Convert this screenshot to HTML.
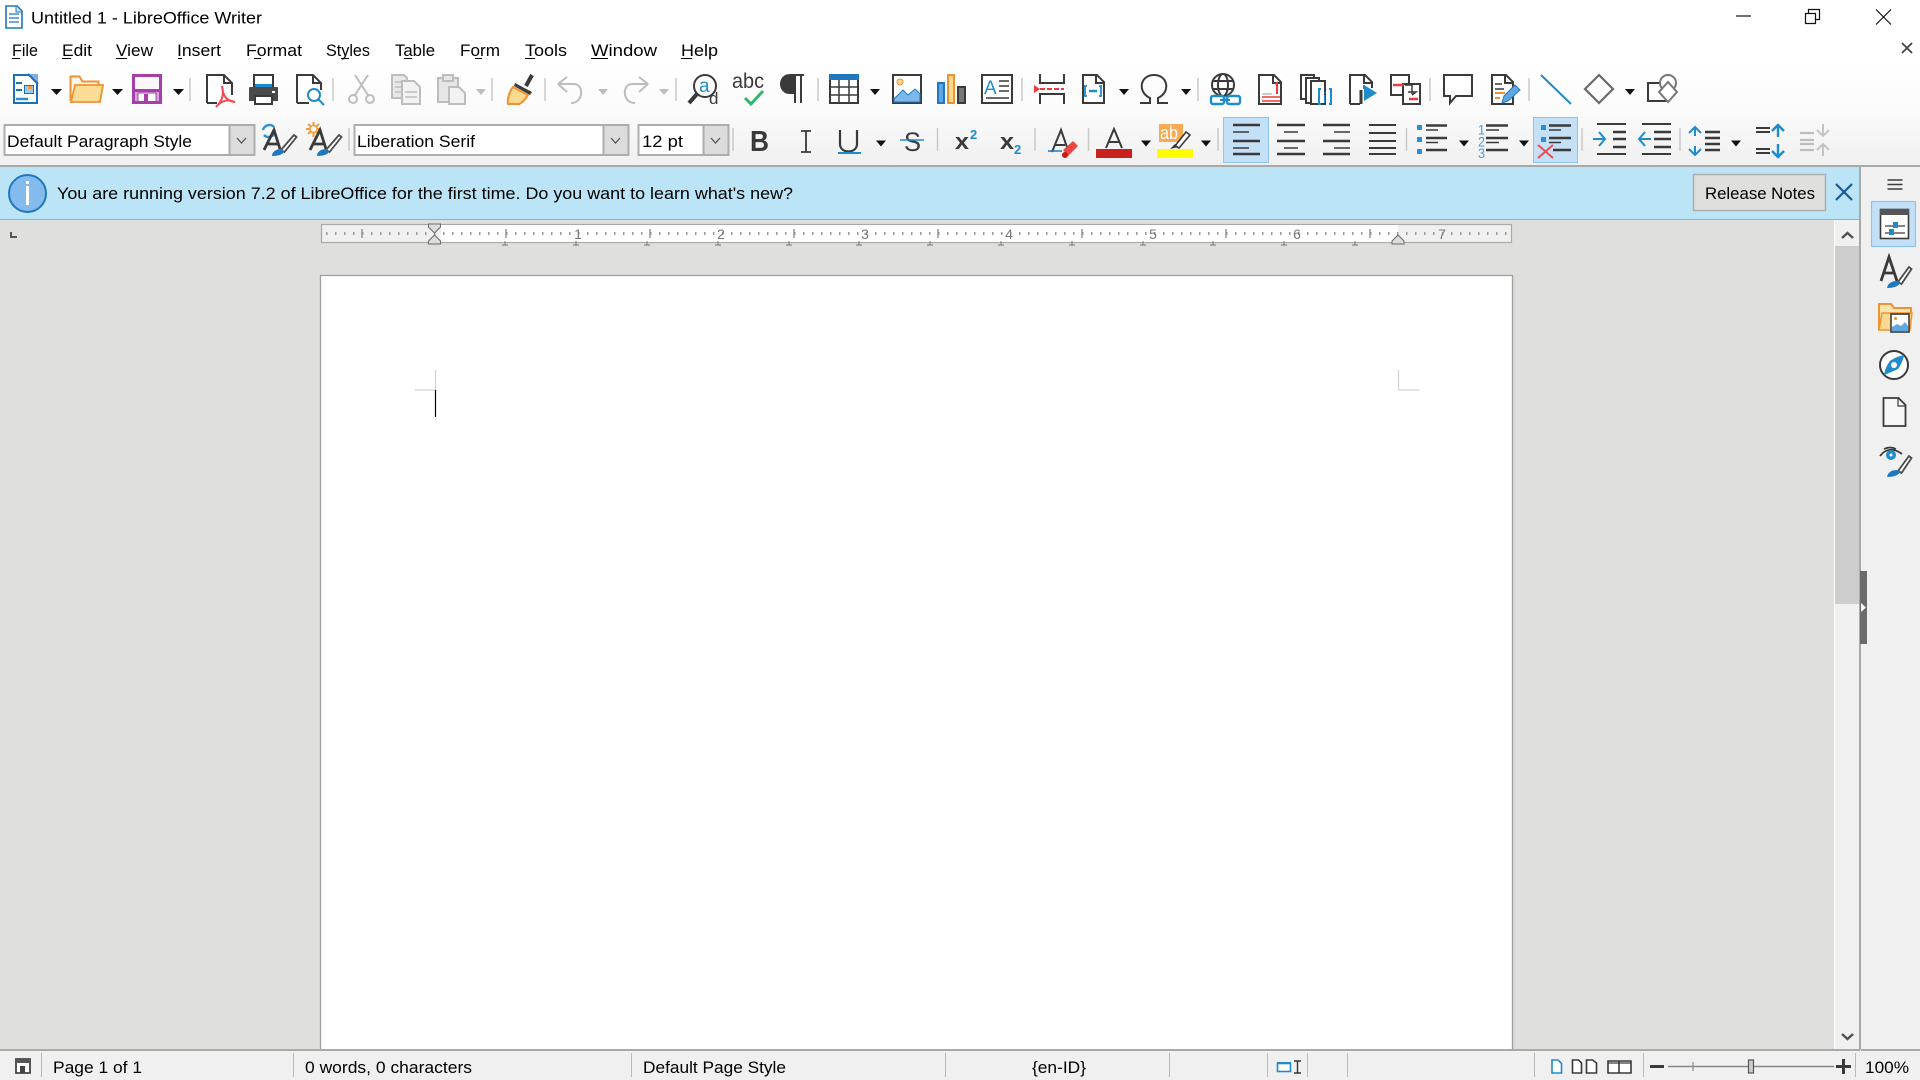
<!DOCTYPE html>
<html><head><meta charset="utf-8"><title>Untitled 1 - LibreOffice Writer</title>
<style>
html,body{margin:0;padding:0;background:#fff;width:1920px;height:1080px;overflow:hidden}
svg{display:block}
text{font-family:"Liberation Sans",sans-serif;font-size:17px;fill:#000}
.s{stroke:#c9c9c9;stroke-width:1.5;fill:none}
.k{fill:none;stroke:#3a3a3a;stroke-width:2}
.g{fill:none;stroke:#bdbdbd;stroke-width:2}
.b{fill:none;stroke:#1e8bcd;stroke-width:2}
.l{fill:none;stroke:#3a3a3a;stroke-width:2.4}
.m{fill:none;stroke:#3a3a3a;stroke-width:2.6}
.n{fill:none;stroke:#3a3a3a;stroke-width:1.5}
</style></head><body>
<svg width="1920" height="1080" viewBox="0 0 1920 1080" xmlns="http://www.w3.org/2000/svg">
<defs><linearGradient id="tb" x1="0" y1="0" x2="0" y2="1"><stop offset="0" stop-color="#fff"/><stop offset="0.45" stop-color="#fbfbfb"/><stop offset="1" stop-color="#f0f0f0"/></linearGradient></defs>
<rect width="1920" height="1080" fill="#fff"/>
<rect x="0" y="62" width="1920" height="104" fill="url(#tb)"/>
<!-- title -->
<path d="M6 6h11l5 5v17H6z" fill="#fff" stroke="#1c78bd" stroke-width="1.6"/><path d="M16 6v6h6" fill="#cfe6f7" stroke="#1c78bd"/><path d="M9 14h10M9 18h10M9 22h10" stroke="#1c78bd" stroke-width="1.2"/>
<text x="31" y="23.500" textLength="231" lengthAdjust="spacingAndGlyphs">Untitled 1 - LibreOffice Writer</text>
<path d="M1736 16h15" stroke="#111" stroke-width="1.2"/>
<path d="M1805.500 13.500h10v10h-10zM1808.500 13.500v-4h11v10h-4" fill="none" stroke="#111" stroke-width="1.2"/>
<path d="M1876 9.500l15 15M1891 9.500l-15 15" stroke="#111" stroke-width="1.2"/>
<path d="M1902 43l10 10M1912 43l-10 10" stroke="#444" stroke-width="1.8"/>
<!-- menu -->
<g>
<text x="12" y="56" textLength="26" lengthAdjust="spacingAndGlyphs">File</text>
<text x="62" y="56" textLength="30" lengthAdjust="spacingAndGlyphs">Edit</text>
<text x="116" y="56" textLength="37" lengthAdjust="spacingAndGlyphs">View</text>
<text x="177" y="56" textLength="44" lengthAdjust="spacingAndGlyphs">Insert</text>
<text x="246" y="56" textLength="56" lengthAdjust="spacingAndGlyphs">Format</text>
<text x="326" y="56" textLength="44" lengthAdjust="spacingAndGlyphs">Styles</text>
<text x="395" y="56" textLength="40" lengthAdjust="spacingAndGlyphs">Table</text>
<text x="460" y="56" textLength="40" lengthAdjust="spacingAndGlyphs">Form</text>
<text x="525" y="56" textLength="42" lengthAdjust="spacingAndGlyphs">Tools</text>
<text x="591" y="56" textLength="66" lengthAdjust="spacingAndGlyphs">Window</text>
<text x="681" y="56" textLength="37" lengthAdjust="spacingAndGlyphs">Help</text>
<path d="M12 58.500h8M62 58.500h9M116 58.500h11M178 58.500h4M254 58.500h7M341 58.500h8M404 58.500h8M475 58.500h7M525 58.500h10M591 58.500h17M681 58.500h11" stroke="#000" stroke-width="1"/>
</g>
<!-- toolbar 1 seps -->
<path class="s" d="M190 78v23M333 78v23M492 78v23M545 78v23M676 78v23M818 78v23M1022 78v23M1198 78v23M1430 78v23M1529 78v23"/>
<!-- dropdown arrows -->
<path d="M51 89h11l-5.500 6zM112 89h11l-5.500 6zM173 89h11l-5.500 6zM870 89h10l-5 6zM1119 89h10l-5 6zM1181 89h10l-5 6zM1625 89h10l-5 6zM876 140.500h10l-5 6zM1141 140.500h10l-5 6zM1201 140.500h10l-5 6zM1459 140.500h10l-5 6zM1519 140.500h10l-5 6zM1731 140.500h10l-5 6z" fill="#111"/>
<path d="M476 89h10l-5 6zM598 89h10l-5 6zM659 89h10l-5 6z" fill="#bdbdbd"/>
<!-- new -->
<path d="M14 75h23v28H14z" fill="#fff" stroke="#1a6fb5" stroke-width="2"/><path d="M27 74h11v11z" fill="#7db0de"/><path d="M28 74l10 10" stroke="#1a6fb5" stroke-width="2"/>
<path d="M16 83h6M16 90h6" stroke="#1a6fb5" stroke-width="2"/><path d="M16 99h12" stroke="#2a8fd6" stroke-width="2.500"/>
<rect x="24.500" y="85.500" width="9" height="8" fill="#9cc9ee" stroke="#1a6fb5"/><rect x="28" y="86" width="4" height="3" fill="#f09a38"/>
<!-- open -->
<path d="M70.500 101V76.500h9l3 5h16v4" fill="#fff8e8" stroke="#ee9236" stroke-width="2"/>
<path d="M71 102l4-17h28l-3 17z" fill="#fbdc94" stroke="#ee9236" stroke-width="1.800"/>
<!-- save -->
<rect x="133.500" y="75.500" width="27" height="27" fill="#fbf7fb" stroke="#a640a8" stroke-width="3"/>
<rect x="133" y="89" width="28" height="14" fill="#d9a3d9"/><rect x="133" y="89" width="28" height="3" fill="#a640a8"/>
<rect x="138" y="93" width="18" height="10" fill="#fff" stroke="#a640a8" stroke-width="1"/><rect x="144" y="94" width="4" height="9" fill="#a640a8"/>
<path d="M133.500 75.500h27v27h-27z" fill="none" stroke="#a640a8" stroke-width="3"/>
<!-- pdf -->
<g transform="translate(206,74)"><path d="M1 29V1h17l8 8v12" fill="#fff" stroke="#3a3a3a" stroke-width="2"/><path d="M1 29h10M18 1v8h8" class="k"/></g>
<path d="M222 86c2 8 1 14-6 21 6-7 12-8 19-5-7-1-12-4-13-16z" fill="none" stroke="#ee4c50" stroke-width="2"/>
<!-- print -->
<g transform="translate(248,74)"><path d="M6 15V1h19v14" fill="#fff" stroke="#3a3a3a" stroke-width="2"/><rect x="7" y="10" width="17" height="4" fill="#1f8ad0"/><path d="M2 13h27a1 1 0 0 1 1 1v13H1V14a1 1 0 0 1 1-1z" fill="#4a4a4a"/><path d="M7 22h17v8H7z" fill="#fff" stroke="#3a3a3a" stroke-width="2"/><rect x="24" y="17" width="3" height="2" fill="#fff"/></g>
<!-- preview -->
<g transform="translate(296,74)"><path d="M1 29V1h16l8 8v7M1 29h12" fill="#fff" stroke="#3a3a3a" stroke-width="2"/><path d="M17 1v8h8" class="k"/><circle cx="18" cy="21" r="6" fill="#fff" stroke="#1e8bcd" stroke-width="2"/><path d="M22 25l6 6" class="b"/></g>
<!-- cut -->
<g transform="translate(348,74)" class="g"><circle cx="5" cy="25" r="4"/><circle cx="22" cy="25" r="4"/><path d="M7 21L20 1M20 21L7 1"/></g>
<!-- copy -->
<g transform="translate(391,74)"><path d="M1 1h12l3 3v20H1z" fill="#e8e8e8" stroke="#bdbdbd" stroke-width="2"/><path d="M11 7h12l6 6v17H11z" fill="#f2f2f2" stroke="#bdbdbd" stroke-width="2"/><path d="M4 8h6M4 13h6M4 18h6M14 18h12M14 23h12" stroke="#bdbdbd" stroke-width="1.500"/></g>
<!-- paste -->
<g transform="translate(437,74)"><path d="M1 4h20v24H1z" fill="#e6e6e6" stroke="#bdbdbd" stroke-width="2"/><rect x="6" y="1" width="10" height="6" fill="#e6e6e6" stroke="#bdbdbd" stroke-width="2"/><path d="M12 13h10l6 6v11H12z" fill="#f2f2f2" stroke="#bdbdbd" stroke-width="2"/></g>
<!-- clone -->
<g transform="translate(506,74)"><path d="M20 12L26 1" stroke="#3a3a3a" stroke-width="4" fill="none"/><path d="M9 9l17 9-2 3L8 12z" fill="#3a3a3a"/><path d="M7 13l15 8c-3 5-6 8-9 9H2c-1-4 1-12 5-17z" fill="#fbd98f" stroke="#ee9236" stroke-width="2"/></g>
<!-- undo/redo -->
<path class="g" d="M558 84l9-7M558 84l9 8M558 84h16c10 0 10 19-3 19"/>
<path class="g" d="M648 84l-9-7M648 84l-9 8M648 84h-16c-10 0-10 19 3 19"/>
<!-- find -->
<g transform="translate(688,74)"><circle cx="17" cy="12" r="11" fill="#fff" stroke="#3a3a3a" stroke-width="2"/><path d="M9 20L1 29" stroke="#3a3a3a" stroke-width="4"/><text x="11" y="18" style="font-size:19px;fill:#1e8bcd">a</text><text x="21" y="30" style="font-size:17px;fill:#3a3a3a">d</text></g>
<!-- spell -->
<text x="732" y="88" textLength="32" lengthAdjust="spacingAndGlyphs" style="font-size:21px;fill:#3a3a3a">abc</text>
<path d="M745 98l6 6 12-13" fill="none" stroke="#2eb86c" stroke-width="3"/>
<!-- pilcrow -->
<path d="M793 75h-3c-12 0-12 18 0 18h3zM794 75h10M795 75v28M801 75v28" fill="#3a3a3a" stroke="#3a3a3a" stroke-width="2"/>
<!-- table -->
<g transform="translate(829,74)"><rect x="1" y="1" width="28" height="28" fill="#fff" stroke="#3a3a3a" stroke-width="2"/><rect x="0" y="0" width="30" height="6" fill="#1e78c0"/><path d="M1 13h28M1 21h28M10 6v23M20 6v23" stroke="#3a3a3a" stroke-width="1.500"/></g>
<!-- image -->
<g transform="translate(892,74)"><rect x="1" y="1" width="28" height="28" fill="#fff" stroke="#3a3a3a" stroke-width="2"/><path d="M2 28v-3l9-9 5 5 7-6 5 5v8z" fill="#7db8ea" stroke="#1e78c0"/><circle cx="8" cy="8" r="3" fill="#fbd98f" stroke="#ee9236"/></g>
<!-- chart -->
<rect x="938" y="83" width="6" height="20" fill="#5fa8e4" stroke="#1e78c0" stroke-width="2"/><rect x="948" y="75" width="6" height="28" fill="#fbd98f" stroke="#ee9236" stroke-width="2"/><rect x="958" y="87" width="7" height="16" fill="#777" stroke="#3a3a3a" stroke-width="2"/>
<!-- textbox -->
<g transform="translate(981,74)"><rect x="1" y="1" width="30" height="28" fill="#fff" stroke="#3a3a3a" stroke-width="2"/><text x="3" y="20" style="font-size:19px;fill:#1e8bcd">A</text><path d="M18 7h10M18 12h10M18 17h10M5 24h23" stroke="#555" stroke-width="1.800"/></g>
<!-- break -->
<path class="k" d="M1040 74v9h24v-9M1040 104v-10h24v10"/><path d="M1040 89h24" stroke="#ee3a3a" stroke-width="2" stroke-dasharray="5 2"/><path d="M1034 85l6 4-6 4z" fill="#ee3a3a"/>
<!-- field -->
<g transform="translate(1082,74)"><path d="M1 1h14l7 7v21H1z" fill="#fff" stroke="#3a3a3a" stroke-width="2"/><path d="M14 1v8h8" class="k"/><path d="M5 12h-2v10h2M17 12h2v10h-2" fill="none" stroke="#1e8bcd" stroke-width="1.800"/><path d="M7 17h8" stroke="#1e8bcd" stroke-width="2.500"/></g>
<!-- omega (drawn thin to match toolbar icon) -->
<path d="M1140 103h10v-5c-13-6-10-23 4-23s17 17 4 23v5h10" fill="none" stroke="#3a3a3a" stroke-width="2"/>
<!-- link -->
<g transform="translate(1209,74)"><circle cx="14" cy="11" r="11" fill="#fff" stroke="#3a3a3a" stroke-width="2"/><ellipse cx="14" cy="11" rx="5" ry="11" class="k"/><path d="M3 7h22M3 15h22" class="k"/><rect x="2" y="22" width="13" height="8" rx="2" fill="#fff" stroke="#1e8bcd" stroke-width="2.400"/><rect x="18" y="22" width="13" height="8" rx="2" fill="#fff" stroke="#1e8bcd" stroke-width="2.400"/><path d="M11 26h10" stroke="#1e8bcd" stroke-width="2"/></g>
<!-- footnote -->
<g transform="translate(1258,74)"><path d="M1 1h15l7 7v22H1z" fill="#fff" stroke="#3a3a3a" stroke-width="2"/><path d="M15 1v8h8" class="k"/><path d="M4 20h10" stroke="#bbb" stroke-width="1.500"/><path d="M4 23h18M4 27h18" stroke="#ee3a3a" stroke-width="1.500"/><path d="M17 10l2-1v11" stroke="#ee3a3a" stroke-width="2" fill="none"/></g>
<!-- index -->
<g transform="translate(1300,74)" fill="#fff" stroke="#3a3a3a" stroke-width="2"><path d="M1 1h13v24H1z"/><path d="M6 4h13v25H6z"/><path d="M11 7h14v23H11z"/><text x="23" y="29" style="font-size:15px;fill:#1e8bcd;stroke:none">i</text><path d="M21 15h-2v15h2M29 15h2v15h-2" stroke="#1e8bcd" fill="none"/></g>
<!-- bookmark -->
<g transform="translate(1349,74)"><path d="M1 30V1h15l7 7v6M14 30" fill="#fff" stroke="#3a3a3a" stroke-width="2"/><path d="M15 1v8h8" class="k"/><path d="M1 30h10" class="k"/><path d="M12 16v14" stroke="#3a3a3a" stroke-width="3"/><path d="M15 11l13 8-13 8z" fill="#1e8bcd"/><path d="M15 15v-4" stroke="#1e8bcd" stroke-width="2"/></g>
<!-- cross ref -->
<g transform="translate(1390,74)"><path d="M1 1h18v20H1z" fill="#fff" stroke="#3a3a3a" stroke-width="2"/><path d="M13 10h17v20H13z" fill="#fff" stroke="#3a3a3a" stroke-width="2"/><path d="M3 11h11" stroke="#ee3a3a" stroke-width="2.500"/><path d="M19 25h9" stroke="#ee3a3a" stroke-width="2.500"/><path d="M15 11h7v9M18 18h8l-4 3" class="k" style="stroke-width:1.500"/></g>
<!-- comment -->
<path d="M1444 75h28v21h-16l-6 7v-7h-6z" fill="#fff" stroke="#3a3a3a" stroke-width="2"/>
<!-- track -->
<g transform="translate(1491,74)"><path d="M1 1h14l7 7v22H1z" fill="#fff" stroke="#3a3a3a" stroke-width="2"/><path d="M14 1v8h8" class="k"/><path d="M4 10h7M4 15h9" stroke="#3a3a3a" stroke-width="1.500"/><path d="M4 19h10M4 24h5" stroke="#ee9236" stroke-width="2"/><path d="M11 29l2-7 11-11 5 5-12 11z" fill="#5fa8e4" stroke="#1e78c0"/></g>
<!-- line -->
<path d="M1541 75l30 29" stroke="#1e8bcd" stroke-width="2"/>
<!-- diamond -->
<path d="M1599 75l14 14-14 14-14-14z" fill="none" stroke="#6a6a6a" stroke-width="2.200"/>
<!-- group -->
<g transform="translate(1647,74)"><rect x="1" y="9" width="20" height="18" fill="#fff" stroke="#3a3a3a" stroke-width="2"/><circle cx="21" cy="9" r="8" fill="#fff" stroke="#777" stroke-width="2"/><path d="M21 8l9 10-9 10-9-10z" fill="#fff" stroke="#777" stroke-width="2"/></g>

<!-- toolbar 2: combos -->
<g fill="#fff" stroke="#adadad" stroke-width="2"><rect x="4.500" y="125" width="250" height="30"/><rect x="354.500" y="125" width="274" height="30"/><rect x="638.500" y="125" width="90" height="30"/></g>
<g fill="#dcdcdc" stroke="#adadad" stroke-width="2"><rect x="229.500" y="125" width="25" height="30"/><rect x="603.500" y="125" width="25" height="30"/><rect x="703.500" y="125" width="25" height="30"/></g>
<path d="M237 138l4.500 5 4.500-5M611 138l4.500 5 4.500-5M711 138l4.500 5 4.500-5" fill="none" stroke="#555" stroke-width="1.300"/>
<text x="7" y="147" textLength="185" lengthAdjust="spacingAndGlyphs">Default Paragraph Style</text>
<text x="357" y="147" textLength="118" lengthAdjust="spacingAndGlyphs">Liberation Serif</text>
<text x="642" y="147" textLength="41" lengthAdjust="spacingAndGlyphs">12 pt</text>
<path class="s" d="M349 128v23M733 128v23M937.500 128v23M1035 128v23M1088.500 128v23M1218 128v23M1406.500 128v23M1582 128v23M1680 128v23"/>
<!-- style update -->
<path d="M263 130a6.500 6.500 0 0 1 11-3M275 132a6.500 6.500 0 0 1-11 3" fill="none" stroke="#2a8fd6" stroke-width="2.400"/>
<path d="M264 150l10-20 6 19M268 144h11" fill="none" stroke="#3a3a3a" stroke-width="2.800"/>
<path d="M281 150l13-15 2.500 2-12 15z" fill="#fff" stroke="#4a4a4a" stroke-width="1.800"/>
<path d="M272 156c0-4 4-7 9-7l3 2c0 3-5 5-12 5z" fill="#1e78c0"/>
<!-- style new -->
<path d="M306 129h15M313.500 122v15M308 124l11 10M319 124l-11 10" stroke="#f09a38" stroke-width="2"/><circle cx="313.500" cy="129" r="3.500" fill="#fff" stroke="#f09a38" stroke-width="1.500"/>
<path d="M310 150l10-20 6 19M314 144h11" fill="none" stroke="#3a3a3a" stroke-width="2.800"/>
<path d="M326 150l13-15 2.500 2-12 15z" fill="#fff" stroke="#4a4a4a" stroke-width="1.800"/>
<path d="M317 156c0-4 4-7 9-7l3 2c0 3-5 5-12 5z" fill="#1e78c0"/>
<!-- B I U S -->
<text x="750" y="151" style="font-size:29px;font-weight:bold;fill:#3a3a3a" textLength="19" lengthAdjust="spacingAndGlyphs">B</text>
<path d="M801 131h10M801 152h10M806 131v21" fill="none" stroke="#3a3a3a" stroke-width="1.800"/>
<path d="M840 130v14c0 10 17 10 17 0v-14" fill="none" stroke="#3a3a3a" stroke-width="2.200"/><path d="M838 153h23" stroke="#1e8bcd" stroke-width="2"/>
<text x="904" y="151" style="font-size:27px;fill:#3a3a3a" textLength="17" lengthAdjust="spacingAndGlyphs">S</text><path d="M900 140h24" stroke="#1e8bcd" stroke-width="1.600"/>
<text x="955" y="149" style="font-size:22px;font-weight:bold;fill:#3a3a3a" textLength="14" lengthAdjust="spacingAndGlyphs">x</text><text x="970" y="139" style="font-size:13px;font-weight:bold;fill:#1e8bcd">2</text>
<text x="1000" y="149" style="font-size:22px;font-weight:bold;fill:#3a3a3a" textLength="14" lengthAdjust="spacingAndGlyphs">x</text><text x="1014" y="154" style="font-size:13px;font-weight:bold;fill:#1e8bcd">2</text>
<!-- clear format -->
<path d="M1052 152l9-22 7 20M1055 145h10" fill="none" stroke="#3a3a3a" stroke-width="2"/><path d="M1048 151h14" stroke="#1e78c0" stroke-width="1.500"/><path d="M1063 150l10-9 5 5-10 10z" fill="#ee4444"/><circle cx="1065" cy="155" r="3" fill="#c81818"/>
<!-- font colour -->
<path d="M1106 148l8-19 8 19M1109 142h10" fill="none" stroke="#3a3a3a" stroke-width="2"/><rect x="1096" y="149" width="36" height="9" fill="#c9211e"/>
<!-- highlight -->
<rect x="1159" y="124" width="24" height="18" fill="#f7a953"/><text x="1160" y="139" style="font-size:18px;fill:#fff" textLength="18" lengthAdjust="spacingAndGlyphs">ab</text><path d="M1175 146l11-14 4 3-11 13z" fill="#fff" stroke="#3a3a3a" stroke-width="1.600"/><path d="M1170 149l5-5 3 3z" fill="#333"/><rect x="1157" y="149" width="36" height="9" fill="#ffff00"/>
<!-- selected align left -->
<rect x="1223.500" y="117.500" width="45" height="45" fill="#c4e0f7" stroke="#8ec5f0"/>
<path class="m" d="M1233 125h27M1233 141h27M1233 154h27"/><path class="n" d="M1233 132h16M1233 148h16"/>
<path class="m" d="M1277 125h28M1277 141h28M1277 154h28"/><path class="n" d="M1284 132h14M1284 148h14"/>
<path class="m" d="M1323 125h27M1323 141h27M1323 154h27"/><path class="n" d="M1334 132h16M1334 148h16"/>
<path class="m" d="M1369 125h27M1369 133h27M1369 141h27M1369 148h27M1369 154h27" style="stroke-width:2"/>
<!-- bullets -->
<g fill="#2a8fd6"><rect x="1417" y="125" width="5" height="5"/><rect x="1417" y="137" width="5" height="5"/><rect x="1417" y="149" width="5" height="5"/></g>
<path class="m" d="M1426 125.500h21M1426 138h21M1426 150h21"/><path class="n" d="M1426 130h12M1426 142.500h12"/>
<text x="1478" y="134.500" style="font-size:14px;fill:#4a9bd8" textLength="7" lengthAdjust="spacingAndGlyphs">1</text><text x="1478" y="146.500" style="font-size:14px;fill:#4a9bd8" textLength="7" lengthAdjust="spacingAndGlyphs">2</text><text x="1478" y="158" style="font-size:14px;fill:#4a9bd8" textLength="7" lengthAdjust="spacingAndGlyphs">3</text>
<path class="m" d="M1486 125.500h22M1486 138h22M1486 150h22"/><path class="n" d="M1486 130h13M1486 142.500h13"/>
<!-- selected no list -->
<rect x="1533.500" y="117.500" width="44" height="45" fill="#c4e0f7" stroke="#8ec5f0"/>
<rect x="1541" y="125" width="5" height="5" fill="#2a8fd6"/><rect x="1541" y="137" width="5" height="5" fill="#2a8fd6"/>
<path class="m" d="M1549 125.500h22M1549 138h22M1553 150h18"/><path class="n" d="M1549 130h12M1549 142.500h12"/>
<path d="M1538 145l15 13M1553 145l-15 13" stroke="#ee4c50" stroke-width="2"/>
<!-- indent -->
<path class="n" d="M1597 124h29M1597 154h29" style="stroke-width:2"/><path class="m" d="M1613 132h13M1613 139h13M1613 147h13"/>
<path d="M1593 139h12M1599 132l6 7-6 7" class="b"/>
<path class="n" d="M1642 124h29M1642 154h29" style="stroke-width:2"/><path class="m" d="M1654 132h17M1654 139h17M1654 147h17"/>
<path d="M1651 139h-12M1645 132l-6 7 6 7" class="b"/>
<!-- line spacing -->
<path d="M1695 127v9M1695 146v9M1689 133l6-6 6 6M1689 149l6 6 6-6" class="b"/>
<path class="m" d="M1705 132h15M1705 138h15M1705 144h15M1705 150h15"/>
<path class="m" d="M1756 128h14M1756 132h14M1756 149h14M1756 153h14" style="stroke-width:2"/>
<path d="M1778 125v12M1772 131l6-6 6 6M1778 144v13M1772 151l6 6 6-6" class="b" style="stroke-width:2.400"/>
<path d="M1800 133h14M1800 140h14M1800 144h14M1800 150h14" stroke="#bdbdbd" stroke-width="2.200"/>
<path d="M1823 124v12M1817 130l6 6 6-6M1823 156v-12M1817 150l6-6 6 6" fill="none" stroke="#c4c4c4" stroke-width="2"/>

<path d="M0 166h1920" stroke="#a9a9a9" stroke-width="2"/>
<!-- infobar -->
<rect x="0" y="167" width="1859" height="52" fill="#bbe5f7"/>
<path d="M0 219.500h1859" stroke="#a9a9a9"/>
<circle cx="27.500" cy="193.500" r="18.500" fill="#83bcec" stroke="#1f78be" stroke-width="2"/>
<rect x="26" y="186" width="3" height="19" fill="#fff"/><rect x="26" y="181" width="3" height="3" fill="#fff"/>
<text x="57" y="199" textLength="736" lengthAdjust="spacingAndGlyphs">You are running version 7.2 of LibreOffice for the first time. Do you want to learn what's new?</text>
<rect x="1693.500" y="174.500" width="132" height="36" fill="#dfdfdd" stroke="#adadad" stroke-width="1.500"/>
<text x="1705" y="199" textLength="110" lengthAdjust="spacingAndGlyphs">Release Notes</text>
<path d="M1836 184l16 16M1852 184l-16 16" stroke="#1a5a96" stroke-width="2.200"/>
<!-- workspace -->
<rect x="0" y="220" width="1834" height="829" fill="#dfdfdd"/>
<path d="M11 232v5h6" fill="none" stroke="#555" stroke-width="2"/>
<!-- ruler -->
<rect x="321.500" y="224.500" width="1190" height="18" fill="#f0f0f0" stroke="#a9a9a9" stroke-width="1.200"/>
<rect x="441" y="225" width="957" height="17" fill="#fff"/>
<path d="M326 233.500H1510" stroke="#9a9a9a" stroke-width="3" stroke-dasharray="1.500 7.500"/>
<path d="M362 229v9M506 229v9M650 229v9M794 229v9M938 229v9M1082 229v9M1226 229v9M1370 229v9" stroke="#888" stroke-width="1.300"/>
<path d="M505 241v4m-3 0h6M576 241v4m-3 0h6M647 241v4m-3 0h6M718 241v4m-3 0h6M789 241v4m-3 0h6M859 241v4m-3 0h6M930 241v4m-3 0h6M1001 241v4m-3 0h6M1072 241v4m-3 0h6M1143 241v4m-3 0h6M1213 241v4m-3 0h6M1284 241v4m-3 0h6M1355 241v4m-3 0h6" stroke="#777" fill="none"/>
<g><text x="578" y="239" style="font-size:14px;fill:#777" text-anchor="middle">1</text><text x="721" y="239" style="font-size:14px;fill:#777" text-anchor="middle">2</text><text x="865" y="239" style="font-size:14px;fill:#777" text-anchor="middle">3</text><text x="1009" y="239" style="font-size:14px;fill:#777" text-anchor="middle">4</text><text x="1153" y="239" style="font-size:14px;fill:#777" text-anchor="middle">5</text><text x="1297" y="239" style="font-size:14px;fill:#777" text-anchor="middle">6</text><text x="1442" y="239" style="font-size:14px;fill:#777" text-anchor="middle">7</text></g>
<path d="M428.500 224h12v3l-6 6-6-6zM428.500 244h12v-3l-6-6-6 6z" fill="#dcdcdc" stroke="#6a6a6a"/>
<path d="M1392 244h12v-3l-6-6-6 6z" fill="#dcdcdc" stroke="#6a6a6a"/>
<!-- page -->
<rect x="320.500" y="275.500" width="1192" height="790" fill="#fff" stroke="#a0a0a0" stroke-width="1.300"/>
<path d="M1514 277V1049" stroke="#d6d6d4"/>
<path d="M435.500 370v20H415M1398.500 370v20h21" fill="none" stroke="#d2d2d2" stroke-width="1.200"/>
<path d="M435.500 390v27" stroke="#000" stroke-width="1.200"/>
<!-- scrollbar -->
<rect x="1834" y="220" width="1" height="830" fill="#fff"/>
<rect x="1835" y="220" width="24" height="830" fill="#f0f0f0"/>
<rect x="1835" y="246" width="24" height="358" fill="#cdcdcd"/>
<path d="M1842 238l5.500-5 5.500 5M1842 1034l5.500 5 5.500-5" fill="none" stroke="#505050" stroke-width="2.400"/>
<!-- sidebar -->
<rect x="1861" y="167" width="59" height="883" fill="#f0f0f0"/>
<rect x="1859" y="167" width="2" height="883" fill="#a9a9a9"/>
<rect x="1860" y="571" width="7" height="73" fill="#6b6b6b"/>
<path d="M1861 603l5 4.500-5 4.500z" fill="#fff"/>
<path d="M1887.500 180h15M1887.500 184.500h15M1887.500 189h15" stroke="#3a3a3a" stroke-width="1.600"/>
<rect x="1871.500" y="201.500" width="44" height="45" fill="#c4e0f7" stroke="#8ec5f0" stroke-width="1.200"/>
<rect x="1880.500" y="209.500" width="28" height="29" fill="#fff" stroke="#3a3a3a" stroke-width="1.600"/><rect x="1880" y="209" width="29" height="6" fill="#555"/>
<path d="M1885 226h20M1885 233h20" stroke="#3a3a3a" stroke-width="1.200"/><rect x="1893" y="222" width="5" height="6" fill="#1e8bcd"/><rect x="1889" y="229" width="5" height="6" fill="#1e8bcd"/>
<!-- styles -->
<path d="M1881 281l8-24 8 24M1884 273h11" fill="none" stroke="#3a3a3a" stroke-width="2.800"/><path d="M1898 282l11-15 2.500 2-10 15z" fill="#fff" stroke="#4a4a4a" stroke-width="1.800"/><path d="M1887 288c1-5 5-7 10-7l3 2c-1 3-6 5-13 5z" fill="#1e78c0"/>
<!-- gallery -->
<path d="M1879 330v-26h12l3 4h17v5" fill="#fce4ad" stroke="#ee9236" stroke-width="2"/><path d="M1879 330l3-17h30l-2 17z" fill="#fbd98f" stroke="#ee9236" stroke-width="1.500"/>
<rect x="1891" y="314" width="18" height="18" fill="#fff" stroke="#3a3a3a" stroke-width="1.600"/><path d="M1892 331v-4l5-3 4 2 4-4 3 4v5z" fill="#5fa8e4"/><circle cx="1895.500" cy="318.500" r="1.500" fill="#ee9236"/>
<!-- navigator -->
<circle cx="1894" cy="365" r="14" fill="#fff" stroke="#3a3a3a" stroke-width="2"/><path d="M1904 355c-1 6-4 11-6 14-4 2-9 4-14 6 1-6 3-10 6-14 4-3 9-5 14-6z" fill="#1e8bcd"/><circle cx="1894" cy="365" r="3" fill="#fff"/>
<!-- page -->
<path d="M1883.500 398h15l7 7v21h-22z" fill="#f7f7f7" stroke="#3a3a3a" stroke-width="1.800"/><path d="M1898 398v8h7" fill="none" stroke="#3a3a3a" stroke-width="1.200"/>
<!-- style inspector -->
<path d="M1880 456c6-8 14-8 22-2M1884 449c4-2 8-2 12 0" fill="none" stroke="#3a3a3a" stroke-width="1.800"/><circle cx="1891" cy="455" r="5" fill="#1e8bcd"/><circle cx="1891" cy="455" r="1.500" fill="#fff"/><path d="M1898 471l11-15 2.500 2-10 15z" fill="#fff" stroke="#4a4a4a" stroke-width="1.800"/><path d="M1887 477c1-5 5-7 10-7l3 2c-1 3-6 5-13 5z" fill="#1e78c0"/>
<!-- status -->
<rect x="0" y="1051" width="1920" height="29" fill="#f0f0f0"/>
<path d="M0 1050h1860" stroke="#a9a9a9" stroke-width="2"/>
<path d="M1861 1050h59" stroke="#a9a9a9" stroke-width="2"/>
<path d="M16 1059h14v14H16z" fill="#fff" stroke="#444" stroke-width="1.800"/><rect x="16" y="1059" width="14" height="4" fill="#555"/><rect x="20" y="1066" width="5" height="7" fill="#444"/>
<path d="M41.500 1053v24M293.500 1053v24M631.500 1053v24M945.500 1053v24M1169.500 1053v24M1267.500 1053v24M1307.500 1053v24M1347.500 1053v24M1534.500 1053v24M1643.500 1053v24M1855.500 1053v24" stroke="#b9b9b9"/>
<text x="53" y="1073" textLength="89" lengthAdjust="spacingAndGlyphs">Page 1 of 1</text>
<text x="305" y="1073" textLength="167" lengthAdjust="spacingAndGlyphs">0 words, 0 characters</text>
<text x="643" y="1073" textLength="143" lengthAdjust="spacingAndGlyphs">Default Page Style</text>
<text x="1032" y="1073" textLength="54" lengthAdjust="spacingAndGlyphs">{en-ID}</text>
<text x="1865" y="1073" textLength="44" lengthAdjust="spacingAndGlyphs">100%</text>
<rect x="1277.500" y="1063.500" width="13" height="8" fill="#fff" stroke="#1e8bcd" stroke-width="1.600"/><path d="M1277 1063h14" stroke="#1e8bcd" stroke-width="2"/>
<path d="M1294 1061h7M1294 1073h7M1297.500 1061v12" stroke="#333" stroke-width="1.400" fill="none"/>
<path d="M1552 1060h6l3.500 3.500v9.500H1552z" fill="#fff" stroke="#1e8bcd" stroke-width="1.600"/>
<path d="M1572.500 1060h6l3 3v10h-9zM1586.500 1060h6l4 3v10h-10z" fill="#fff" stroke="#3a3a3a" stroke-width="1.600"/>
<path d="M1608 1061h11v12h-11zM1619 1061h12v12h-12z" fill="#fff" stroke="#3a3a3a" stroke-width="1.600"/><path d="M1608 1063h23" stroke="#3a3a3a" stroke-width="1.200"/>
<path d="M1650 1066.500h14" stroke="#3a3a3a" stroke-width="3"/>
<path d="M1668 1066.500h166" stroke="#888" stroke-width="1.500"/><path d="M1693 1062v9" stroke="#888" stroke-width="1.200"/>
<rect x="1748.500" y="1060" width="5" height="13" fill="#ccc" stroke="#555" stroke-width="1.200"/>
<path d="M1836 1066.500h15M1843.500 1059v15" stroke="#3a3a3a" stroke-width="3"/>
</svg>
</body></html>
